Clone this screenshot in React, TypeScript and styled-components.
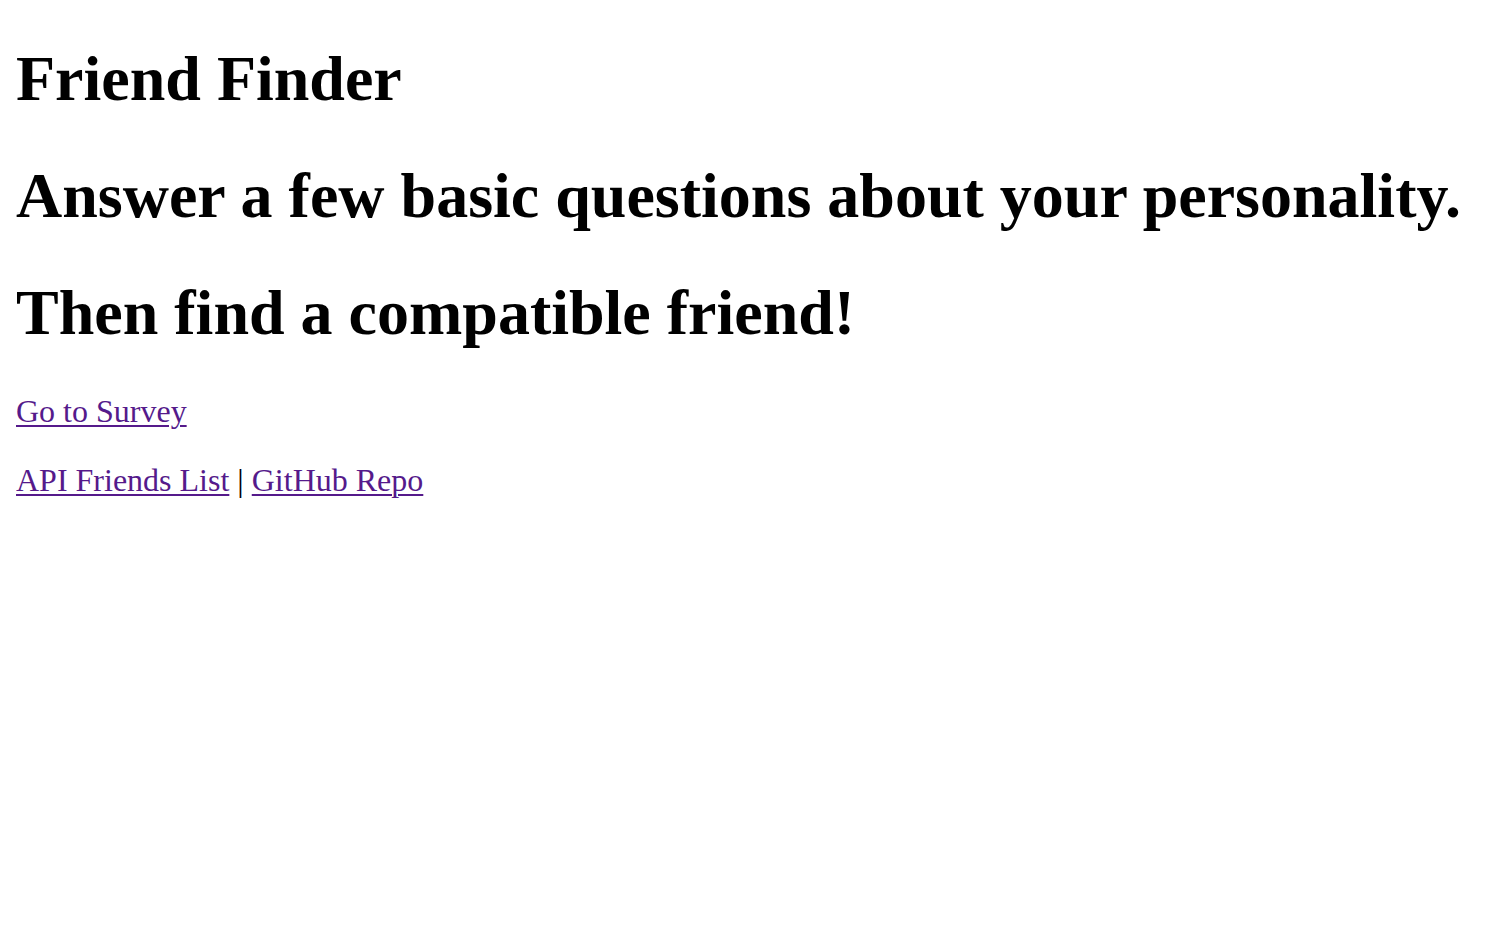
import React from "react";
import styled, { createGlobalStyle } from "styled-components";

const GlobalStyle = createGlobalStyle`
  html, body {
    background: #ffffff;
  }
  body {
    margin: 16px;
    font-family: "Liberation Serif", "Times New Roman", serif;
    color: #000000;
  }
`;

const Page = styled.main`
  display: block;
`;

const Heading = styled.h1`
  font-family: "Liberation Serif", "Times New Roman", serif;
  font-size: 64px;
  font-weight: 700;
  margin: 42.88px 0;
  line-height: normal;

  &:first-child {
    margin-top: 26px;
  }
`;

const Paragraph = styled.p`
  font-size: 32px;
  margin: 32px 0;
  line-height: normal;
`;

const Link = styled.a`
  color: #551a8b;
  text-decoration: underline;
  text-decoration-thickness: 2px;
  text-underline-offset: 3px;
`;

export default function App() {
  return (
    <>
      <GlobalStyle />
      <Page>
        <Heading>Friend Finder</Heading>
        <Heading>Answer a few basic questions about your personality.</Heading>
        <Heading>Then find a compatible friend!</Heading>
        <Paragraph>
          <Link href="#survey">Go to Survey</Link>
        </Paragraph>
        <Paragraph>
          <Link href="#api">API Friends List</Link> | <Link href="#github">GitHub Repo</Link>
        </Paragraph>
      </Page>
    </>
  );
}
